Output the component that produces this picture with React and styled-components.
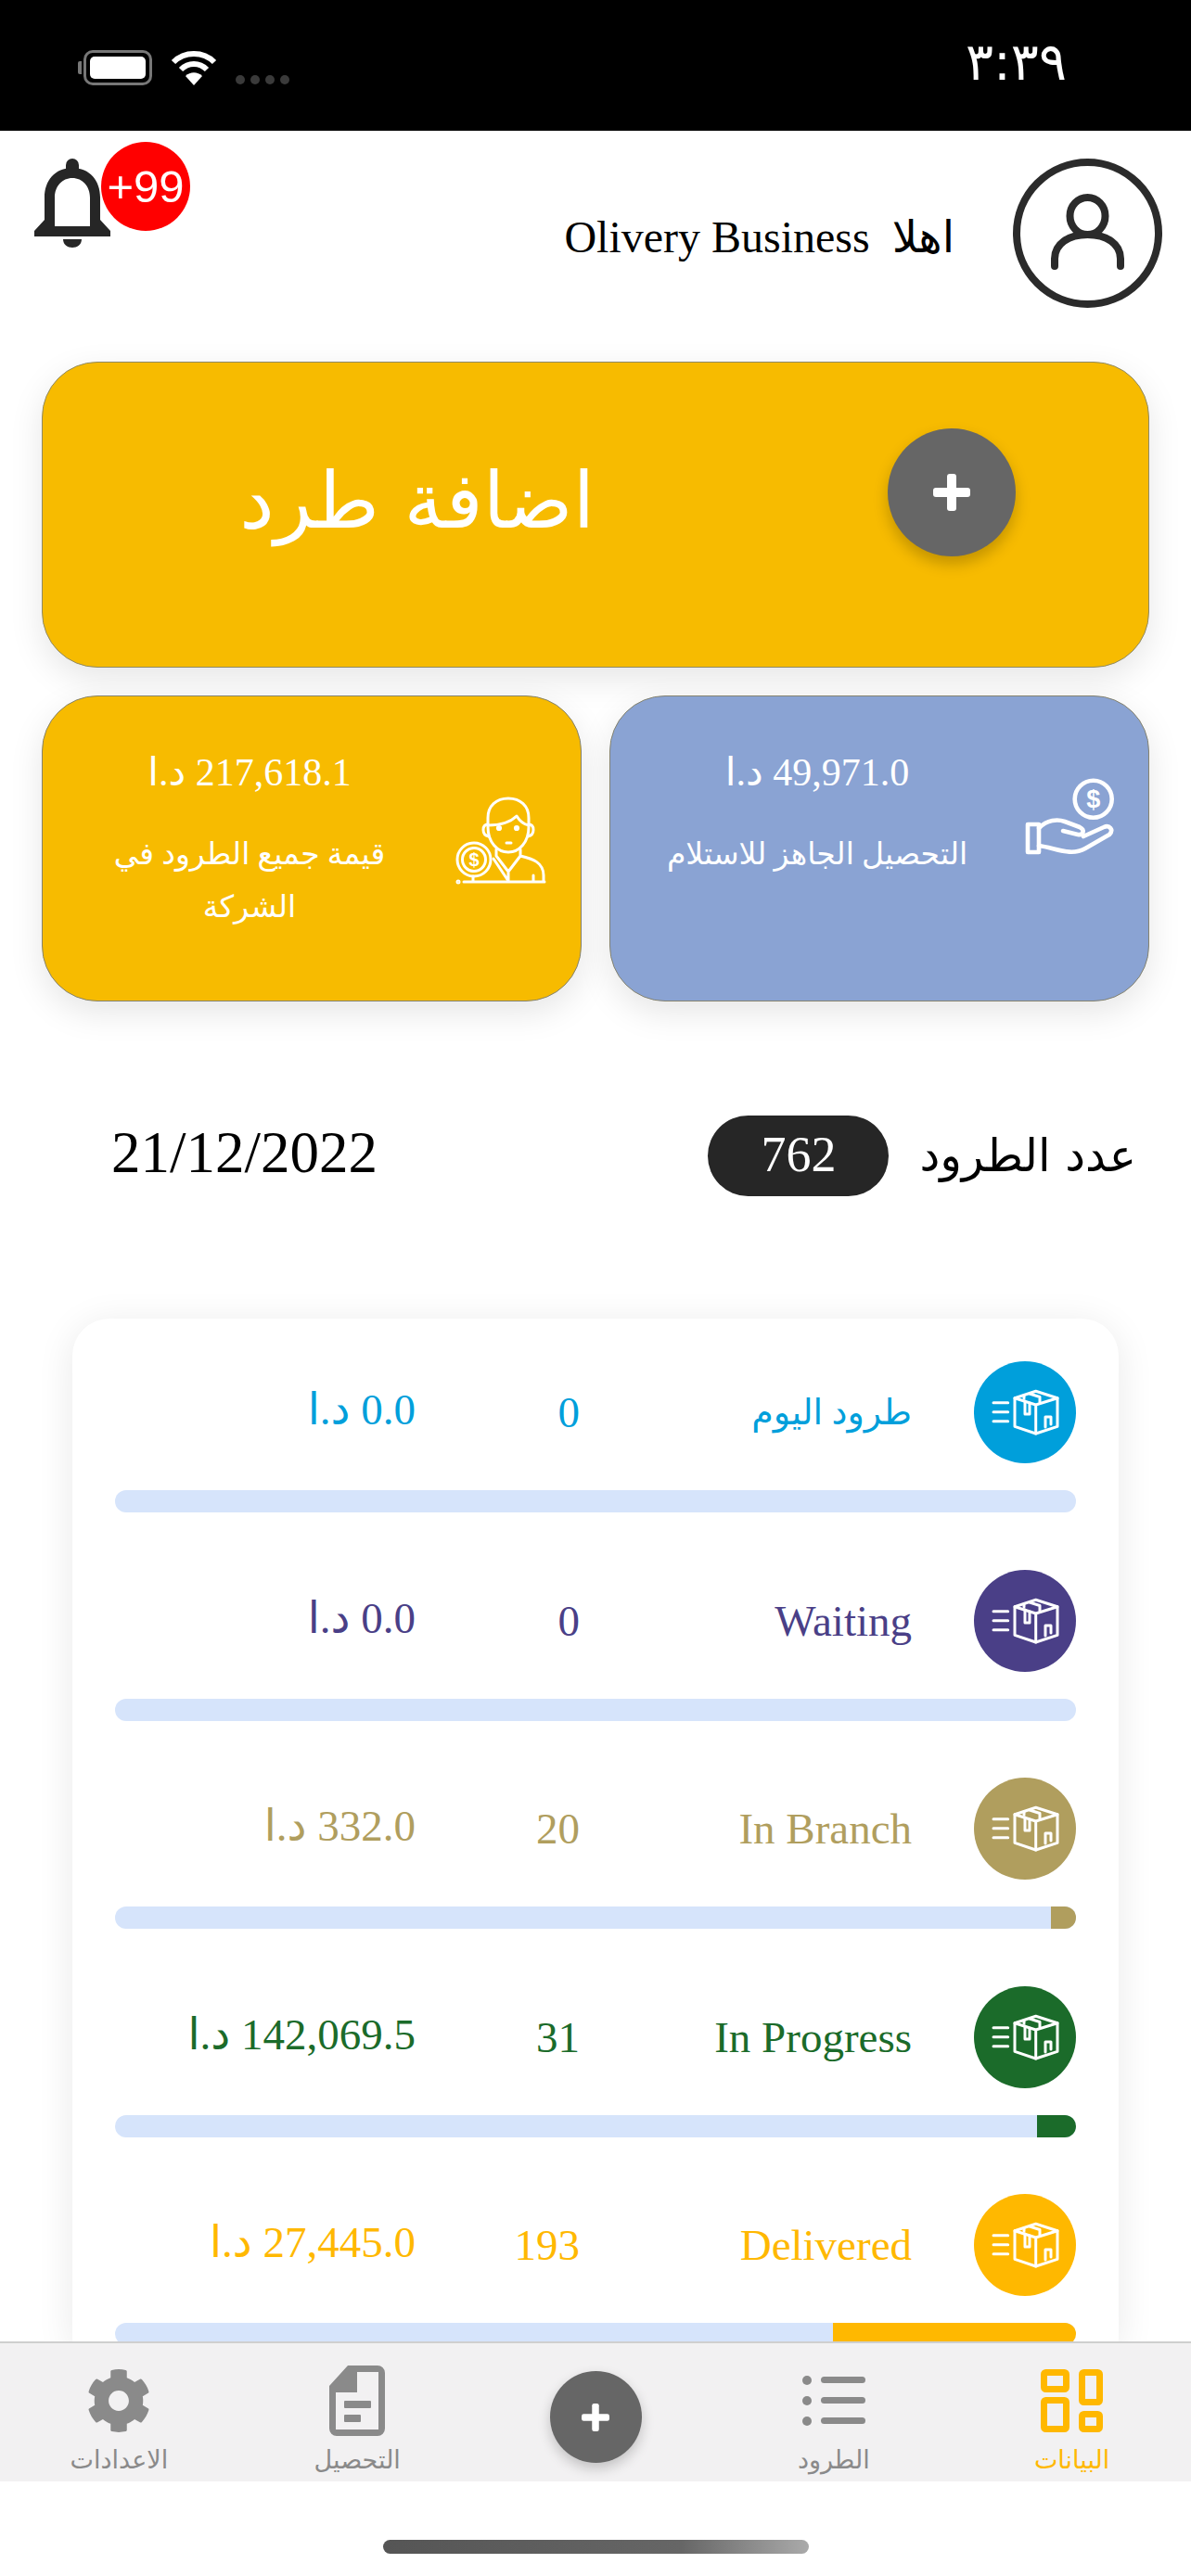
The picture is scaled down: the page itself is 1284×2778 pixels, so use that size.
import styled, {createGlobalStyle} from 'styled-components';
import {FaCog} from 'react-icons/fa';

const YELLOW = '#f7bb00';
const GREY = '#8a8a8a';
const TOTAL_PARCELS = 762;

const rows = [
  {id: 'today', title: 'طرود اليوم', titleSize: 38, count: 0, amount: '0.0 د.ا', color: '#009fdb'},
  {id: 'waiting', title: 'Waiting', titleSize: 47, count: 0, amount: '0.0 د.ا', color: '#4a3f87'},
  {id: 'branch', title: 'In Branch', titleSize: 47, count: 20, amount: '332.0 د.ا', color: '#b09e5e'},
  {id: 'progress', title: 'In Progress', titleSize: 47, count: 31, amount: '142,069.5 د.ا', color: '#1b6b2a'},
  {id: 'delivered', title: 'Delivered', titleSize: 47, count: 193, amount: '27,445.0 د.ا', color: '#ffb800'},
];

function BellIcon() {
  return (
    <svg width="82" height="96" viewBox="0 0 82 96">
      <rect x="34" y="0" width="14" height="20" rx="7" fill="#262626" />
      <path
        fillRule="evenodd"
        fill="#262626"
        d="M41 10C22 10 11 24 11 42V66L0 78V84H82V78L71 66V42C71 24 60 10 41 10ZM41 21C30 21 22 30 22 42V73H60V42C60 30 52 21 41 21Z"
      />
      <path d="M31 87H51C51 93 46 96 41 96S31 93 31 87Z" fill="#262626" />
    </svg>
  );
}

function UserIcon() {
  return (
    <svg width="161" height="161" viewBox="0 0 161 161" fill="none" stroke="#2b2b2b">
      <circle cx="80.5" cy="80.5" r="76.5" strokeWidth="8" />
      <ellipse cx="80.5" cy="62" rx="19" ry="20" strokeWidth="8" />
      <path d="M45 116V108C45 92 60 82 80.5 82S116 92 116 108V116" strokeWidth="8" strokeLinecap="round" />
    </svg>
  );
}

function AgentIcon() {
  return (
    <svg width="100" height="98" viewBox="20 18 100 98" fill="none" stroke="#fff" strokeWidth="3" strokeLinecap="round" strokeLinejoin="round">
      <path d="M56 52V42C56 29 65 21 78 21S100 29 100 42V52C100 68 90 79 78 79S56 68 56 52Z" />
      <path d="M56 50C68 50 80 47 87 40C90 45 95 49 100 50" />
      <path d="M56 49C52 49 51 52 51 55S52 61 57 62M100 49C104 49 105 52 105 55S104 61 99 62" />
      <path d="M76 69H81" />
      <path d="M65 76V83L78 100L91 83V76M91 83C104 86 116 90 116 104V110M62 86L78 110M78 100V110M105 104V110" />
      <circle cx="41" cy="87" r="18" />
      <circle cx="41" cy="87" r="12.5" />
      <path d="M30 111H117M40 105V111" />
      <circle cx="24" cy="111" r="1" />
      <circle cx="68" cy="53" r="1.6" fill="#fff" />
      <circle cx="87" cy="53" r="1.6" fill="#fff" />
      <text x="41" y="94" textAnchor="middle" fontSize="20" fontFamily="Liberation Sans, sans-serif" fontWeight="700" fill="#fff" stroke="none">$</text>
    </svg>
  );
}

function CashIcon() {
  return (
    <svg width="100" height="92" viewBox="20 12 100 92" fill="none" stroke="#fff" strokeWidth="4.6" strokeLinecap="round" strokeLinejoin="round">
      <circle cx="96.7" cy="41.7" r="20" />
      <rect x="26" y="69" width="12" height="30" />
      <path d="M38 73C47 64 58 63 66 66L82 72C88 75 86 81 80 80L64 76" />
      <path d="M38 92C55 94 72 104 88 95L114 80C119 75 114 69 108 72L86 82" />
      <text x="96.7" y="51" textAnchor="middle" fontSize="27" fontFamily="Liberation Sans, sans-serif" fontWeight="700" fill="#fff" stroke="none">$</text>
    </svg>
  );
}

function ParcelIcon() {
  return (
    <svg width="110" height="110" viewBox="0 0 110 110" fill="none" stroke="#fff" strokeWidth="3" strokeLinecap="round" strokeLinejoin="round">
      <path d="M44 39.7L66.7 32.3L90 39.7V70.3L66.7 78L44 70.3Z" />
      <path d="M44 39.7L66.7 47L90 39.7M66.7 47V78" />
      <path d="M54 36.5V40M60 35L71 38.5V44M55 43V57H60V45" />
      <path d="M77 71V60H83V68" />
      <path d="M21 44.7H36.7M21 54.7H36.7M21 64.7H36.7" />
    </svg>
  );
}

function DashboardIcon() {
  return (
    <svg width="68" height="68" viewBox="0 0 68 68" fill="none" stroke="#ffb800" strokeWidth="7">
      <rect x="3.5" y="3.5" width="24" height="18" rx="2" />
      <rect x="44.5" y="3.5" width="19" height="32" rx="2" />
      <rect x="3.5" y="33.5" width="24" height="31" rx="2" />
      <rect x="44.5" y="48.5" width="19" height="16" rx="2" />
    </svg>
  );
}

function ListIcon() {
  return (
    <svg width="68" height="60" viewBox="0 0 68 60" fill={GREY}>
      <circle cx="5" cy="8" r="5" />
      <circle cx="5" cy="30" r="5" />
      <circle cx="5" cy="52" r="5" />
      <rect x="20" y="4" width="48" height="7" rx="3.5" />
      <rect x="20" y="26" width="48" height="7" rx="3.5" />
      <rect x="20" y="48" width="48" height="7" rx="3.5" />
    </svg>
  );
}

function FileIcon() {
  return (
    <svg width="60" height="76" viewBox="0 0 60 76" fill={GREY}>
      <path
        fillRule="evenodd"
        d="M20 0H52A8 8 0 0 1 60 8V68A8 8 0 0 1 52 76H8A8 8 0 0 1 0 68V22ZM30 7V29H7V69H53V7Z"
      />
      <rect x="16" y="38" width="29" height="8" rx="1" />
      <rect x="16" y="53" width="18" height="8" rx="1" />
    </svg>
  );
}

function WifiIcon() {
  return (
    <svg width="50" height="38" viewBox="0 0 50 38" fill="none" stroke="#fff" strokeWidth="6">
      <path d="M3 13C15 1 35 1 47 13" />
      <path d="M11 21C19 13 31 13 39 21" />
      <path d="M25 38L16 28C21 23 29 23 34 28Z" fill="#fff" stroke="none" />
    </svg>
  );
}

function PlusGlyph({size}) {
  return (
    <svg width={size} height={size} viewBox="0 0 40 40" fill="#fff">
      <rect x="15" y="0" width="10" height="40" rx="3" />
      <rect x="0" y="15" width="40" height="10" rx="3" />
    </svg>
  );
}

export default function App() {
  return (
    <>
      <GlobalStyle />
      <Screen dir="rtl">
        <StatusBar>
          <StatusTime>٣:٣٩</StatusTime>
          <StatusIcons>
            <Signal>
              <SignalDot />
              <SignalDot />
              <SignalDot />
              <SignalDot />
            </Signal>
            <WifiIcon />
            <Battery>
              <BatteryLevel />
            </Battery>
          </StatusIcons>
        </StatusBar>

        <Main>
          <Header>
            <UserIcon />
            <Greeting>اهلا&nbsp;&nbsp;Olivery Business</Greeting>
            <BellWrap>
              <BellIcon />
              <Badge>+99</Badge>
            </BellWrap>
          </Header>

          <HeroCard>
            <HeroButton>
              <PlusGlyph size={40} />
            </HeroButton>
            <HeroText>اضافة طرد</HeroText>
          </HeroCard>

          <SummaryGrid>
            <SummaryCard $bg="#8aa3d3">
              <SummaryIcon $top={24}>
                <CashIcon />
              </SummaryIcon>
              <SummaryText>
                <SummaryAmount>49,971.0 د.ا</SummaryAmount>
                <SummaryLabel>التحصيل الجاهز للاستلام</SummaryLabel>
              </SummaryText>
            </SummaryCard>
            <SummaryCard $bg={YELLOW}>
              <SummaryIcon $top={50}>
                <AgentIcon />
              </SummaryIcon>
              <SummaryText>
                <SummaryAmount>217,618.1 د.ا</SummaryAmount>
                <SummaryLabel>قيمة جميع الطرود في الشركة</SummaryLabel>
              </SummaryText>
            </SummaryCard>
          </SummaryGrid>

          <CountRow>
            <CountLabel>عدد الطرود</CountLabel>
            <CountPill>{TOTAL_PARCELS}</CountPill>
            <DateText>21/12/2022</DateText>
          </CountRow>

          <ListCard>
            {rows.map(row => (
              <StatusRow key={row.id}>
                <RowTop $color={row.color}>
                  <RowIcon $color={row.color}>
                    <ParcelIcon />
                  </RowIcon>
                  <RowTitle $size={row.titleSize}>{row.title}</RowTitle>
                  <RowCount>{row.count}</RowCount>
                  <RowAmount>{row.amount}</RowAmount>
                </RowTop>
                <Bar>
                  <BarFill $color={row.color} style={{width: `${(row.count / TOTAL_PARCELS) * 100}%`}} />
                </Bar>
              </StatusRow>
            ))}
          </ListCard>
        </Main>

        <TabBar>
          <Tab $active>
            <TabIcon>
              <DashboardIcon />
            </TabIcon>
            <TabLabel>البيانات</TabLabel>
          </Tab>
          <Tab>
            <TabIcon>
              <ListIcon />
            </TabIcon>
            <TabLabel>الطرود</TabLabel>
          </Tab>
          <Tab>
            <TabFab>
              <PlusGlyph size={30} />
            </TabFab>
          </Tab>
          <Tab>
            <TabIcon>
              <FileIcon />
            </TabIcon>
            <TabLabel>التحصيل</TabLabel>
          </Tab>
          <Tab>
            <TabIcon>
              <FaCog size={70} color={GREY} />
            </TabIcon>
            <TabLabel>الاعدادات</TabLabel>
          </Tab>
        </TabBar>

        <HomeArea>
          <HomeIndicator />
        </HomeArea>
      </Screen>
    </>
  );
}

const GlobalStyle = createGlobalStyle`
  html, body {
    margin: 0;
    padding: 0;
    background: #fff;
  }
  * {
    box-sizing: border-box;
  }
`;

const Screen = styled.div`
  width: 1284px;
  height: 2778px;
  display: flex;
  flex-direction: column;
  overflow: hidden;
  background: #fff;
  font-family: 'Liberation Serif', 'DejaVu Sans', serif;
`;

const StatusBar = styled.div`
  height: 141px;
  flex-shrink: 0;
  background: #000;
  display: flex;
  align-items: center;
  justify-content: space-between;
  padding: 0 134px 0 90px;
`;

const StatusTime = styled.div`
  margin-bottom: 8px;
  color: #fff;
  font-family: 'DejaVu Sans', sans-serif;
  font-size: 56px;
  line-height: 60px;
`;

const StatusIcons = styled.div`
  direction: ltr;
  display: flex;
  flex-direction: row-reverse;
  align-items: center;
  gap: 20px;
  margin-top: 4px;
`;

const Signal = styled.div`
  display: flex;
  gap: 6px;
  align-self: flex-end;
  margin-bottom: 1px;
`;

const SignalDot = styled.span`
  width: 10px;
  height: 10px;
  border-radius: 50%;
  background: #3a3a3a;
`;

const Battery = styled.div`
  position: relative;
  width: 74px;
  height: 38px;
  padding: 4px;
  border: 3px solid #777;
  border-radius: 10px;
  &::before {
    content: '';
    position: absolute;
    left: -9px;
    top: 9px;
    width: 4px;
    height: 14px;
    border-radius: 2px 0 0 2px;
    background: #777;
  }
`;

const BatteryLevel = styled.div`
  width: 100%;
  height: 100%;
  border-radius: 5px;
  background: #fff;
`;

const Main = styled.main`
  flex: 1;
  min-height: 0;
  overflow: hidden;
  padding: 0 45px;
`;

const Header = styled.header`
  display: flex;
  align-items: flex-start;
  margin: 30px -14px 58px -8px;
  height: 161px;
`;

const Greeting = styled.div`
  margin: 58px 63px 0 0;
  font-size: 48px;
  line-height: 54px;
  color: #000;
  white-space: nowrap;
`;

const BellWrap = styled.div`
  position: relative;
  margin-right: auto;
  width: 82px;
  height: 96px;
`;

const Badge = styled.div`
  position: absolute;
  left: 72px;
  top: -18px;
  width: 96px;
  height: 96px;
  border-radius: 50%;
  background: #f00;
  color: #fff;
  display: flex;
  align-items: center;
  justify-content: center;
  direction: ltr;
  font-family: 'Liberation Sans', sans-serif;
  font-size: 49px;
`;

const HeroCard = styled.section`
  height: 330px;
  display: flex;
  align-items: flex-start;
  gap: 316px;
  padding: 71px 143px 0 0;
  border: 1px solid #8f8a66;
  border-radius: 60px;
  background: ${YELLOW};
  box-shadow: 0 12px 36px rgba(0, 0, 0, 0.1);
`;

const HeroButton = styled.div`
  width: 138px;
  height: 138px;
  border-radius: 50%;
  background: #666;
  display: flex;
  align-items: center;
  justify-content: center;
  box-shadow: 0 8px 16px rgba(0, 0, 0, 0.22);
`;

const HeroText = styled.div`
  margin-top: 9px;
  color: #fff;
  font-family: 'DejaVu Sans', sans-serif;
  font-size: 84px;
  line-height: 138px;
  white-space: nowrap;
`;

const SummaryGrid = styled.section`
  display: grid;
  grid-template-columns: 1fr 1fr;
  gap: 30px;
  margin-top: 30px;
`;

const SummaryCard = styled.article`
  height: 330px;
  display: flex;
  align-items: flex-start;
  gap: 46px;
  padding: 57px 36px 0 0;
  border: 1px solid #85836f;
  border-radius: 60px;
  background: ${props => props.$bg};
  box-shadow: 0 12px 36px rgba(0, 0, 0, 0.1);
`;

const SummaryIcon = styled.div`
  flex-shrink: 0;
  margin-top: ${props => props.$top}px;
  line-height: 0;
`;

const SummaryText = styled.div`
  width: 350px;
  text-align: center;
  color: #fff;
`;

const SummaryAmount = styled.div`
  font-size: 42px;
  line-height: 50px;
`;

const SummaryLabel = styled.div`
  margin-top: 35px;
  font-size: 33px;
  line-height: 57px;
`;

const CountRow = styled.section`
  display: flex;
  align-items: center;
  margin: 123px 14px 132px 75px;
`;

const CountLabel = styled.div`
  font-family: 'DejaVu Sans', sans-serif;
  font-size: 49px;
  color: #000;
`;

const CountPill = styled.div`
  width: 195px;
  height: 87px;
  margin-right: 33px;
  border-radius: 44px;
  background: #262626;
  color: #fff;
  font-size: 54px;
  padding-bottom: 4px;
  display: flex;
  align-items: center;
  justify-content: center;
`;

const DateText = styled.div`
  margin-right: auto;
  margin-bottom: 6px;
  direction: ltr;
  font-size: 63px;
  color: #000;
`;

const ListCard = styled.section`
  margin: 0 33px;
  padding: 46px 46px 0 46px;
  border-radius: 40px 40px 0 0;
  background: #fff;
  box-shadow: 0 6px 40px rgba(0, 0, 0, 0.09);
  display: flex;
  flex-direction: column;
  gap: 61.5px;
`;

const StatusRow = styled.div`
  display: flex;
  flex-direction: column;
  gap: 29px;
`;

const RowTop = styled.div`
  display: grid;
  grid-template-columns: 110px 425px 177px 1fr;
  align-items: center;
  color: ${props => props.$color};
  font-size: 47px;
  line-height: 54px;
`;

const RowIcon = styled.div`
  width: 110px;
  height: 110px;
  border-radius: 50%;
  background: ${props => props.$color};
  line-height: 0;
`;

const RowTitle = styled.div`
  padding-right: 67px;
  font-size: ${props => props.$size}px;
  white-space: nowrap;
`;

const RowCount = styled.div`
  white-space: nowrap;
`;

const RowAmount = styled.div`
  margin-top: -6px;
  white-space: nowrap;
`;

const Bar = styled.div`
  height: 24px;
  border-radius: 12px;
  overflow: hidden;
  background: #d6e4fb;
`;

const BarFill = styled.div`
  height: 100%;
  background: ${props => props.$color};
`;

const TabBar = styled.nav`
  height: 151px;
  flex-shrink: 0;
  position: relative;
  display: grid;
  grid-template-columns: repeat(5, 1fr);
  border-top: 2px solid #cfcfcf;
  background: #f2f1f2;
`;

const Tab = styled.div`
  display: flex;
  flex-direction: column;
  align-items: center;
  color: ${props => (props.$active ? '#ffb800' : '#8a8a8a')};
`;

const TabIcon = styled.div`
  height: 76px;
  margin-top: 24px;
  display: flex;
  align-items: center;
  justify-content: center;
`;

const TabLabel = styled.div`
  margin-top: 8px;
  font-family: 'DejaVu Sans', sans-serif;
  font-size: 27px;
  line-height: 36px;
  white-space: nowrap;
`;

const TabFab = styled.div`
  width: 99px;
  height: 99px;
  margin-top: 30px;
  border-radius: 50%;
  background: #666;
  display: flex;
  align-items: center;
  justify-content: center;
  box-shadow: 0 6px 14px rgba(0, 0, 0, 0.2);
`;

const HomeArea = styled.div`
  height: 102px;
  flex-shrink: 0;
  display: flex;
  justify-content: center;
  padding-top: 63px;
  background: #fff;
`;

const HomeIndicator = styled.div`
  width: 459px;
  height: 15px;
  border-radius: 8px;
  background: linear-gradient(to right, #555 0%, #666 70%, #aaa 100%);
`;
